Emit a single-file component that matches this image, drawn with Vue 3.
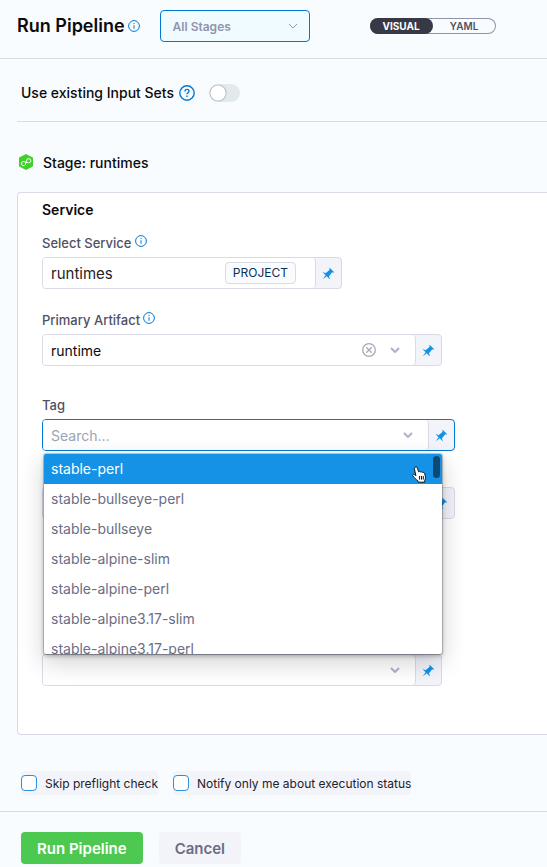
<script setup>
import { ref } from 'vue'

const view = ref('VISUAL')
const views = ['VISUAL', 'YAML']
const useInputSets = ref(false)
const service = ref('runtimes')
const artifact = ref('runtime')
const query = ref('')
const active = ref(0)
const tags = [
  'stable-perl',
  'stable-bullseye-perl',
  'stable-bullseye',
  'stable-alpine-slim',
  'stable-alpine-perl',
  'stable-alpine3.17-slim',
  'stable-alpine3.17-perl',
]
const pin =
  'M9.41.92c-.51.51-.41 1.5.15 2.56L4.34 7.54C2.8 6.48 1.45 6.05.92 6.58l3.54 3.54-3.54 4.95 4.95-3.54 3.54 3.54c.53-.53.1-1.88-.96-3.42l4.06-5.22c1.06.56 2.04.66 2.55.15L9.41.92z'
</script>

<template>
  <div class="page">
    <header class="header">
      <h1>Run Pipeline</h1>
      <svg class="info" viewBox="0 0 12 12"><circle cx="6" cy="6" r="5.4" /><path d="M6 5.2v3.6M6 3v1.1" /></svg>
      <div class="stages">
        <select aria-label="Stages"><option>All Stages</option></select>
        <svg class="chevron thin" viewBox="0 0 10 6"><path d="M1 1l4 4 4-4" /></svg>
      </div>
      <div class="toggle">
        <button v-for="v in views" :key="v" type="button" :class="{ on: view === v }" @click="view = v">{{ v }}</button>
      </div>
    </header>

    <section class="input-sets">
      <label for="sets">Use existing Input Sets</label>
      <svg class="help" viewBox="0 0 16 16">
        <circle cx="8" cy="8" r="7.2" />
        <path d="M6 6.4c0-1.2.8-2 2-2s2 .8 2 1.8c0 1.5-2 1.5-2 3M8 10.6v1.4" />
      </svg>
      <input id="sets" v-model="useInputSets" type="checkbox" class="switch" />
    </section>

    <main>
      <h2 class="stage">
        <svg viewBox="0 0 16 16">
          <path d="M8 0l6.4 3.3Q15 3.6 15 4.3v7.4q0 .7-.6 1L8 16l-6.4-3.3q-.6-.3-.6-1V4.3q0-.7.6-1z" fill="#42d02c" />
          <path d="M7.4 8.6A2.1 2.1 0 1 1 5.3 7.5q1 0 1.8.6l1.8.2q.8.5 1.8.5A2.1 2.1 0 1 0 8.6 6.8L7.4 9.6" fill="none" stroke="#fff" />
        </svg>
        <span>Stage: runtimes</span>
      </h2>

      <section class="card">
        <h3>Service</h3>

        <div class="field narrow">
          <div class="label">
            <label for="service">Select Service</label>
            <svg class="info raised" viewBox="0 0 12 12"><circle cx="6" cy="6" r="5.4" /><path d="M6 5.2v3.6M6 3v1.1" /></svg>
          </div>
          <div class="control">
            <div class="inner scoped">
              <input id="service" v-model="service" type="text" />
              <span class="scope">PROJECT</span>
            </div>
            <button type="button" class="pin" aria-label="Value type"><svg viewBox="0 0 16 16"><path :d="pin" /></svg></button>
          </div>
        </div>

        <div class="field medium artifact">
          <div class="label">
            <label for="artifact">Primary Artifact</label>
            <svg class="info raised" viewBox="0 0 12 12"><circle cx="6" cy="6" r="5.4" /><path d="M6 5.2v3.6M6 3v1.1" /></svg>
          </div>
          <div class="control">
            <div class="inner">
              <input id="artifact" v-model="artifact" type="text" />
              <button type="button" class="clear" aria-label="Clear" @click="artifact = ''">
                <svg viewBox="0 0 14 14"><circle cx="7" cy="7" r="6.3" /><path d="M4.3 4.3l5.4 5.4M9.7 4.3L4.3 9.7" /></svg>
              </button>
              <svg class="chevron" viewBox="0 0 10 6"><path d="M1 1l4 4 4-4" /></svg>
            </div>
            <button type="button" class="pin" aria-label="Value type"><svg viewBox="0 0 16 16"><path :d="pin" /></svg></button>
          </div>
        </div>

        <div class="field wide tag">
          <div class="label"><label for="tag">Tag</label></div>
          <div class="control focused">
            <div class="inner">
              <input id="tag" v-model="query" type="text" placeholder="Search..." />
              <svg class="chevron" viewBox="0 0 10 6"><path d="M1 1l4 4 4-4" /></svg>
            </div>
            <button type="button" class="pin" aria-label="Value type"><svg viewBox="0 0 16 16"><path :d="pin" /></svg></button>
          </div>
          <div class="menu">
            <ul role="listbox" aria-label="Tag">
              <li v-for="(t, i) in tags" :key="t" role="option" :aria-selected="i === active" :class="{ active: i === active }" @click="active = i">{{ t }}</li>
            </ul>
            <span class="thumb"></span>
            <svg class="pointer" viewBox="0 0 16 18">
              <path d="M4.2 1.2c1-.5 1.8 0 2.2 1l1.3 3.6c.7-.5 1.5-.4 2 .3.8-.5 1.6-.3 2 .5 1-.4 1.7.1 2 1l.8 3.2c.3 1.7-.4 2.5-.8 3.7l-.1 1.700H7.300l-.5-1.500C5 13.400 3.600 12 1.800 9.900c-.7-.9.4-2 1.500-1.400l1.600 1.100-1.500-6.700c-.2-.8 0-1.400.8-1.700z" fill="#fff" stroke="#111" />
              <path d="M8.600 10v3.600M10.500 10v3.600M12.300 10v3.600" stroke="#111" fill="none" />
            </svg>
          </div>
        </div>

        <div class="field wide digest">
          <div class="control">
            <div class="inner"><input type="text" aria-label="Digest" /></div>
            <button type="button" class="pin" aria-label="Value type"><svg viewBox="0 0 16 16"><path :d="pin" /></svg></button>
          </div>
        </div>

        <div class="field medium last">
          <div class="control">
            <div class="inner">
              <input type="text" aria-label="Environment" />
              <svg class="chevron" viewBox="0 0 10 6"><path d="M1 1l4 4 4-4" /></svg>
            </div>
            <button type="button" class="pin" aria-label="Value type"><svg viewBox="0 0 16 16"><path :d="pin" /></svg></button>
          </div>
        </div>
      </section>
    </main>

    <div class="options">
      <label><input type="checkbox" />Skip preflight check</label>
      <label><input type="checkbox" />Notify only me about execution status</label>
    </div>

    <footer>
      <button type="button" class="run">Run Pipeline</button>
      <button type="button" class="cancel">Cancel</button>
    </footer>
  </div>
</template>

<style>
body {
  background: #f9fcff;
}
</style>

<style scoped>
.page,
.page * {
  box-sizing: border-box;
}
.page {
  font-family: Inter, sans-serif;
  font-size: 14px;
  color: #0b0b0d;
  background: #f9fcff;
}
h1,
h2,
h3,
ul {
  margin: 0;
  padding: 0;
}
button,
input,
select {
  font: inherit;
  margin: 0;
}
button {
  border: 0;
  padding: 0;
  background: none;
  cursor: pointer;
}
svg {
  display: block;
  flex: none;
}
.header {
  display: flex;
  align-items: center;
  height: 59px;
  padding: 0 17px 6px;
  border-bottom: 1px solid #d9dae5;
}
h1 {
  font-size: 18px;
  line-height: 24px;
  font-weight: 600;
  white-space: nowrap;
}
.info {
  width: 12px;
  height: 12px;
  margin-left: 3px;
  fill: none;
  stroke: #0278d5;
}
.raised {
  align-self: flex-start;
  margin-top: 2px;
}
.stages {
  display: grid;
  align-items: center;
  width: 150px;
  margin-left: 20px;
}
.stages > * {
  grid-area: 1 / 1;
}
.stages select {
  appearance: none;
  width: 100%;
  height: 32px;
  padding: 0 12px;
  border: 1px solid #0278d5;
  border-radius: 4px;
  background: #effbff;
  color: #9293ab;
  font-size: 12px;
  font-weight: 600;
}
.chevron {
  width: 10px;
  height: 6px;
  fill: none;
  stroke: #b0b1c4;
  stroke-width: 2;
}
.chevron.thin {
  justify-self: end;
  margin-right: 12px;
  stroke: #9293ab;
  stroke-width: 1;
  pointer-events: none;
}
.toggle {
  display: flex;
  width: 126px;
  height: 16px;
  margin-left: 60px;
  border-radius: 8px;
  box-shadow: inset 0 0 0 1px #9293ab;
}
.toggle button {
  flex: 1;
  border-radius: 8px;
  font-size: 10px;
  font-weight: 600;
  color: #4f5162;
}
.toggle .on {
  background: #383946;
  color: #fff;
  font-weight: 700;
}
.input-sets {
  display: flex;
  align-items: center;
  height: 63px;
  margin-left: 17px;
  padding: 5px 4px 0;
  border-bottom: 1px solid #d9dae5;
  font-weight: 500;
}
.help {
  width: 16px;
  height: 16px;
  margin: 0 14px 0 5px;
  fill: none;
  stroke: #0278d5;
  stroke-width: 1.4;
}
.switch {
  appearance: none;
  width: 31px;
  height: 18px;
  border-radius: 9px;
  background: radial-gradient(circle at 9px 9px, #fff 7px, #b5bdc2 8px, transparent 9px) #e3eaed;
}
.switch:checked {
  background: radial-gradient(circle at 22px 9px, #fff 7px, #0278d5 8px, transparent 9px) #0278d5;
}
main {
  padding: 30px 0 0 17px;
}
.stage {
  display: flex;
  align-items: center;
  gap: 9px;
  height: 20px;
  padding-left: 1px;
  font-size: 14px;
  font-weight: 500;
}
.stage svg {
  width: 16px;
  height: 16px;
}
.card {
  margin-top: 20px;
  padding: 7px 24px 48px;
  border: 1px solid #d9dae5;
  border-right: 0;
  border-radius: 4px 0 0 4px;
  background: #fff;
}
h3 {
  font-size: 14px;
  line-height: 20px;
  font-weight: 600;
}
.field {
  position: relative;
  max-width: 100%;
  margin-top: 13px;
}
.narrow {
  width: 300px;
}
.medium {
  width: 400px;
}
.wide {
  width: 413px;
}
.artifact {
  margin-top: 21px;
}
.tag {
  margin-top: 29px;
}
.digest {
  margin-top: 36px;
}
.last {
  margin-top: 135px;
}
.label {
  display: flex;
  align-items: center;
  height: 20px;
  margin-bottom: 4px;
  font-size: 13px;
  font-weight: 500;
  color: #4f5162;
}
.control {
  display: flex;
  height: 32px;
  border: 1px solid #d9dae5;
  border-radius: 4px;
  background: #f3f3fa;
}
.focused {
  border-color: #0278d5;
}
.inner {
  display: flex;
  flex: 1;
  align-items: center;
  min-width: 0;
  padding: 0 15px 0 8px;
  border-right: 1px solid #d9dae5;
  border-radius: 3px 4px 4px 3px;
  background: #fff;
}
.scoped {
  padding-right: 19px;
}
.inner input {
  flex: 1;
  min-width: 0;
  padding: 0;
  border: 0;
  outline: 0;
  background: none;
  color: #0b0b0d;
}
.inner.scoped input {
  font-size: 15px;
  color: #22222a;
}
.inner input::placeholder {
  color: #9aa5b1;
  opacity: 1;
}
.scope {
  padding: 0 7px;
  border: 1px solid #d9dae5;
  border-radius: 4px;
  background: #fafbfc;
  font-size: 12px;
  line-height: 20px;
  color: #07305f;
}
.clear {
  margin-right: 14px;
}
.clear svg {
  width: 14px;
  height: 14px;
  fill: none;
  stroke: #a5abb5;
  stroke-width: 1.3;
}
.pin {
  display: grid;
  place-items: center;
  width: 25px;
}
.pin svg {
  width: 13px;
  height: 13px;
  fill: #1192e4;
}
.menu {
  position: absolute;
  z-index: 1;
  top: 59px;
  left: 2px;
  width: 398px;
  border-radius: 2px;
  background: #fff;
  box-shadow: 0 0 0 1px rgba(16, 22, 26, 0.2), 0 2px 4px rgba(16, 22, 26, 0.3), 0 8px 24px rgba(16, 22, 26, 0.2);
}
.menu ul {
  height: 200px;
  overflow-y: auto;
  scrollbar-width: none;
  list-style: none;
  border-radius: 2px;
}
.menu li {
  height: 30px;
  padding: 0 7px;
  line-height: 30px;
  color: #6b6d85;
}
.menu .active {
  background: #1592e6;
  color: #fff;
}
.thumb {
  position: absolute;
  top: 2px;
  right: 2px;
  width: 7px;
  height: 22px;
  border-radius: 4px;
  background: #0a4a75;
}
.pointer {
  position: absolute;
  top: 12px;
  right: 15px;
  width: 16px;
  height: 18px;
}
.options {
  display: flex;
  flex-wrap: wrap;
  gap: 15px;
  padding: 36px 21px 16px;
}
.options label {
  display: flex;
  align-items: center;
  gap: 8px;
  height: 24px;
  border-radius: 4px;
  background: #f3f3fa;
  font-size: 12px;
  color: #22222a;
}
.options input {
  appearance: none;
  width: 16px;
  height: 16px;
  border: 1px solid #2b8fdd;
  border-radius: 4px;
  background: #fff;
}
.options input:checked {
  background: #0278d5;
}
footer {
  display: flex;
  gap: 16px;
  padding: 20px 21px 3px;
  border-top: 1px solid #d9dae5;
}
footer button {
  height: 32px;
  padding: 0 16px;
  border-radius: 4px;
  font-size: 15px;
  font-weight: 600;
}
.run {
  background: #4dc952;
  color: #fff;
}
.cancel {
  background: #f3f3fa;
  color: #6b6d85;
}
</style>
